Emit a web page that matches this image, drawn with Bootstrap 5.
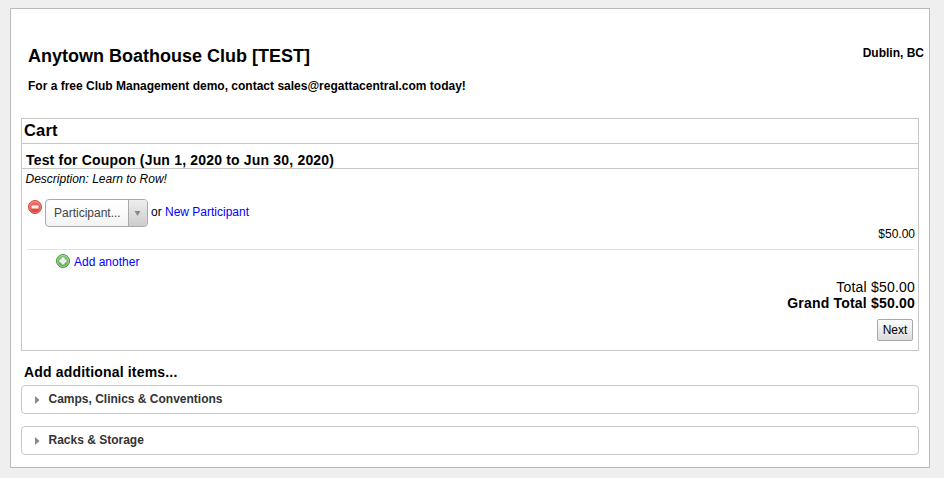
<!DOCTYPE html>
<html lang="en">
<head>
<meta charset="utf-8">
<meta name="viewport" content="width=device-width, initial-scale=1">
<title>Cart</title>
<link href="https://cdn.jsdelivr.net/npm/bootstrap@5.3.0/dist/css/bootstrap.min.css" rel="stylesheet">
<style>
body{background:#efefef;color:#000;font:12px/16px "Liberation Sans",Arial,sans-serif;overflow:hidden}
a{color:#00f;text-decoration:none}
svg{display:block;flex:none}
.page-box{width:920px;height:460px;margin:8px 0 0 10px;border:1px solid #bababa;background:#fff}
.club-head{height:109px;padding:35px 5px 0 17px}
.club-name{font-size:18px;line-height:24px;font-weight:700;margin:0}
.club-note{margin:10px 0 0}
.place{padding-top:1px}
.cart-box{height:233px;margin:0 10px;border:1px solid #c8c8c8}
.cart-title{height:25px;padding-left:2px;border-bottom:1px solid #c8c8c8;font-size:16.500px;line-height:23px;font-weight:700;letter-spacing:.2px;margin:0}
.item-title{height:25px;padding:8px 0 0 4px;border-bottom:1px solid #c8c8c8;font-size:14px;line-height:16px;font-weight:700;letter-spacing:.18px;margin:0}
.item-note{height:30px;padding:2px 0 0 3.500px}
.item-row{padding-left:5px;height:27px}
.picker{width:103px;height:28px;border:1px solid #aaa;border-radius:4px;background:linear-gradient(#fff 15%,#f3f3f3);color:#444;margin:0 3px 0 3px;padding:0;font-size:12px;overflow:hidden}
.picker-text{width:82px;padding-left:8px;line-height:26px;text-align:left}
.picker-arrow{width:19px;border-left:1px solid #aaa;background:linear-gradient(#eee,#ccc);padding-right:2px}
.or-text{padding-top:5px}
.item-price{height:23px;padding:0 3px;line-height:16px}
.rule{height:1px;background:#e2e2e2;margin:0 3px 0 5px}
.add-row{padding:4px 0 0 34px;height:29px;gap:4px}
.totals{font-size:14px;line-height:16px;padding-right:3px;letter-spacing:.2px}
.next-btn{width:36px;height:22px;margin:8px 5px 0 0;padding:0;border:1px solid #a8a8a8;border-radius:2px;background:linear-gradient(#fdfdfd,#dcdcdc);color:#000;font-size:12px;line-height:20px}
.more-title{font-size:14px;line-height:16px;font-weight:700;letter-spacing:.18px;margin:13px 0 5px 13px}
.fold{height:29px;margin:0 10px 12px;border:1px solid #c8c8c8;border-radius:4px;padding-left:12px;color:#333;font-weight:700}
.fold span{line-height:27px;margin-left:8.500px}
.fold svg{margin-top:7px}
</style>
</head>
<body>
<main class="page-box">
  <header class="club-head d-flex justify-content-between align-items-start">
    <div>
      <h1 class="club-name">Anytown Boathouse Club [TEST]</h1>
      <p class="club-note fw-bold">For a free Club Management demo, contact sales@regattacentral.com today!</p>
    </div>
    <div class="place fw-bold">Dublin, BC</div>
  </header>
  <section class="cart-box">
    <h2 class="cart-title">Cart</h2>
    <h3 class="item-title">Test for Coupon (Jun 1, 2020 to Jun 30, 2020)</h3>
    <div class="item-note fst-italic">Description: Learn to Row!</div>
    <div class="item-row d-flex align-items-start">
      <svg width="15" height="16" viewBox="0 0 15 16"><defs><linearGradient id="r" x2="0" y2="1"><stop stop-color="#ee7c6e"/><stop offset="1" stop-color="#d5362e"/></linearGradient></defs><circle cx="8" cy="8" r="6.500" fill="url(#r)" stroke="#d5463c"/><circle cx="8" cy="8" r="5.500" fill="none" stroke="#f5b0a8" stroke-opacity=".5"/><path d="M4.500 6.500h7v3h-7z" fill="#fff"/><path d="M5.500 7.500h5v1h-5z" fill="#f7d4d0"/></svg>
      <button class="picker d-flex" type="button"><span class="picker-text">Participant...</span><span class="picker-arrow d-flex flex-grow-1 align-self-stretch align-items-center justify-content-center"><svg width="7" height="6" viewBox="0 0 7 6"><path d="M.5 1h6L3.500 6z" fill="#888"/></svg></span></button>
      <div class="or-text">or <a href="#">New Participant</a></div>
    </div>
    <div class="item-price text-end">$50.00</div>
    <div class="rule"></div>
    <div class="add-row d-flex align-items-start">
      <svg width="14" height="14" viewBox="0 0 14 14"><defs><linearGradient id="g" x2="0" y2="1"><stop stop-color="#84c47a"/><stop offset="1" stop-color="#4ba23f"/></linearGradient></defs><circle cx="7" cy="7" r="6.500" fill="url(#g)" stroke="#4b9443"/><circle cx="7" cy="7" r="5.500" fill="none" stroke="#b4dbad" stroke-opacity=".8"/><path d="M5.500 3.500h3v2h2v3h-2v2h-3v-2h-2v-3h2z" fill="#fff"/><path d="M6.500 4.500h1v2h2v1h-2v2h-1v-2h-2v-1h2z" fill="#d9eed5"/></svg>
      <a href="#">Add another</a>
    </div>
    <div class="totals text-end"><div>Total $50.00</div><div class="fw-bold">Grand Total $50.00</div></div>
    <div class="d-flex justify-content-end"><button class="next-btn" type="button">Next</button></div>
  </section>
  <h2 class="more-title">Add additional items...</h2>
  <div class="fold d-flex align-items-start"><svg width="6" height="11" viewBox="0 0 6 11"><path d="M1 3v8l4.500-4z" fill="#888"/></svg><span>Camps, Clinics &amp; Conventions</span></div>
  <div class="fold d-flex align-items-start"><svg width="6" height="11" viewBox="0 0 6 11"><path d="M1 3v8l4.500-4z" fill="#888"/></svg><span>Racks &amp; Storage</span></div>
</main>
<script src="https://cdn.jsdelivr.net/npm/bootstrap@5.3.0/dist/js/bootstrap.bundle.min.js"></script>
</body>
</html>
